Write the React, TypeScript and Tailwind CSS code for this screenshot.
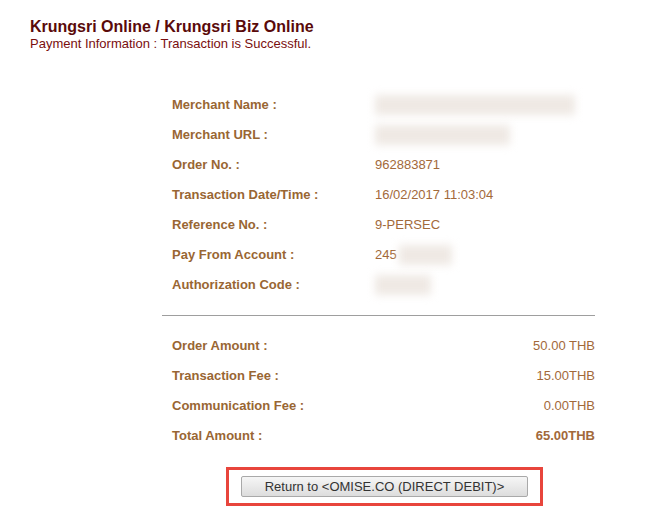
const rowsTop = [
  { label: "Merchant Name :", value: null, blur: "w-[200px]" },
  { label: "Merchant URL :", value: null, blur: "w-[135px]" },
  { label: "Order No. :", value: "962883871" },
  { label: "Transaction Date/Time :", value: "16/02/2017 11:03:04" },
  { label: "Reference No. :", value: "9-PERSEC" },
  { label: "Pay From Account :", value: "245", blur: "w-[53px]" },
  { label: "Authorization Code :", value: null, blur: "w-[56px]" },
];

const rowsBottom = [
  { label: "Order Amount :", value: "50.00 THB", bold: false },
  { label: "Transaction Fee :", value: "15.00THB", bold: false },
  { label: "Communication Fee :", value: "0.00THB", bold: false },
  { label: "Total Amount :", value: "65.00THB", bold: true },
];

const Smudge = ({ className }: { className: string }) => (
  <span className={`inline-block h-[20px] align-middle bg-[#efe9e4] blur-[4px] ${className}`} />
);

export default function App() {
  return (
    <div className="min-h-screen w-full bg-white font-['Liberation_Sans',Arial,sans-serif]">
      <div className="pl-[30px] pt-[17px]">
        <h1 className="text-[16px] font-bold leading-[19px] text-[#5a0a0a]">
          Krungsri Online / Krungsri Biz Online
        </h1>
        <p className="text-[13px] leading-[15px] text-[#7a0e0e]">
          Payment Information : Transaction is Successful.
        </p>
      </div>

      <div className="ml-[162px] mt-[39px] w-[433px]">
        <div className="flex flex-col">
          {rowsTop.map((r) => (
            <div key={r.label} className="flex h-[30px] items-center text-[13px]">
              <div className="w-[213px] pl-[10px] font-bold text-[#996633]">{r.label}</div>
              <div className="flex items-center text-[#a2693a]">
                {r.value && <span>{r.value}</span>}
                {r.blur && <Smudge className={r.value ? `ml-[2px] ${r.blur}` : r.blur} />}
              </div>
            </div>
          ))}
        </div>

        <div className="mb-[15px] mt-[15px] h-px bg-[#9e9e9e]" />

        <div className="flex flex-col">
          {rowsBottom.map((r) => (
            <div key={r.label} className="flex h-[30px] items-center justify-between text-[13px]">
              <div className="pl-[10px] font-bold text-[#996633]">{r.label}</div>
              <div className={`text-[#a2693a] ${r.bold ? "font-bold" : ""}`}>{r.value}</div>
            </div>
          ))}
        </div>
      </div>

      <div className="ml-[226px] mt-[16px] flex h-[39px] w-[317px] items-center justify-center border-[3px] border-[#e8453c]">
        <button className="h-[21px] w-[287px] rounded-[2px] border border-[#a9a9a9] bg-gradient-to-b from-[#f6f6f6] to-[#dddddd] text-[13px] leading-[19px] text-[#333333]">
          Return to &lt;OMISE.CO (DIRECT DEBIT)&gt;
        </button>
      </div>
    </div>
  );
}
